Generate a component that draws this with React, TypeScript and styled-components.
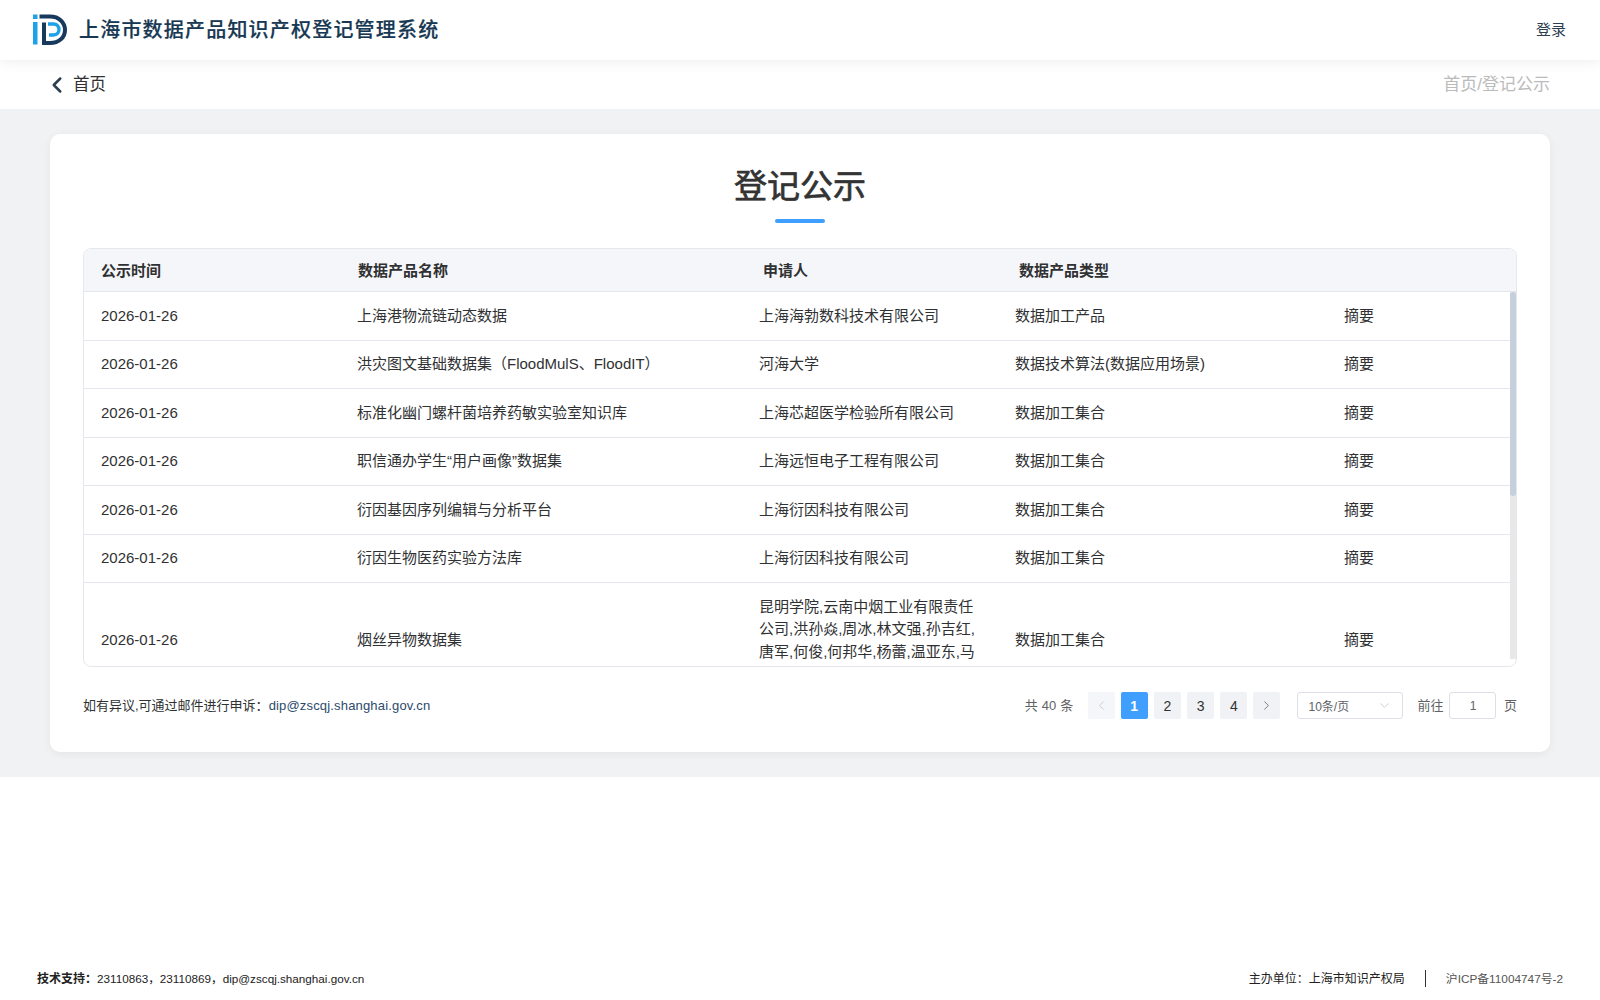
import React from "react";
import styled, { createGlobalStyle } from "styled-components";
import { ChevronLeft, ChevronRight, ChevronDown } from "lucide-react";

const Global = createGlobalStyle`
  html, body { margin: 0; padding: 0; background: #fff; }
  body { font-family: "Liberation Sans", "Noto Sans CJK SC", sans-serif; color: #303133; }
  * { box-sizing: border-box; }
`;

const Page = styled.div`
  min-height: 1000px;
  display: flex;
  flex-direction: column;
`;
const Header = styled.header`
  position: relative;
  z-index: 2;
  height: 60px;
  padding: 0 34px 0 33px;
  display: flex;
  align-items: center;
  justify-content: space-between;
  background: #fff;
  box-shadow: 0 2px 12px rgba(0, 0, 0, 0.07);
`;
const Brand = styled.div`
  display: flex;
  align-items: center;
  gap: 11px;
`;
const BrandName = styled.h1`
  margin: 0 0 4px;
  font-size: 20px;
  font-weight: 500;
  letter-spacing: 1.2px;
  color: #173853;
  -webkit-text-stroke: 0.2px #173853;
`;
const Login = styled.a`
  margin-bottom: 4px;
  font-size: 15px;
  color: #2c3e50;
`;
const Nav = styled.nav`
  height: 49px;
  padding: 0 50px 0 44px;
  display: flex;
  align-items: center;
  justify-content: space-between;
  background: #fff;
`;
const Back = styled.a`
  display: flex;
  align-items: center;
  gap: 3px;
  font-size: 16.5px;
  color: #303133;
`;
const BackLabel = styled.span`
  margin-bottom: 4px;
`;
const Crumb = styled.span`
  margin-bottom: 4px;
  font-size: 17px;
  color: #bbb;
`;
const Main = styled.main`
  background: #f1f2f4;
  padding: 25px 50px;
`;
const Card = styled.section`
  height: 618px;
  padding: 33px 33px 0;
  background: #fff;
  border-radius: 10px;
  box-shadow: 0 2px 10px rgba(0, 0, 0, 0.06);
`;
const Title = styled.h2`
  margin: 0;
  height: 36px;
  line-height: 40px;
  text-align: center;
  font-size: 33px;
  font-weight: 400;
  color: #333;
  -webkit-text-stroke: 0.7px #333;
`;
const TitleBar = styled.div`
  width: 50px;
  height: 4px;
  margin: 16px auto 25px;
  border-radius: 2px;
  background: #409eff;
`;
const TableWrap = styled.div`
  position: relative;
  height: 419px;
  border: 1px solid #e4e7ed;
  border-radius: 8px;
  overflow: hidden;
`;
const Row = styled.div<{ $columns: string }>`
  display: grid;
  grid-template-columns: ${(p) => p.$columns};
  align-items: center;
  border-bottom: 1px solid #e4e7ed;
`;
const HeadRow = styled(Row)`
  height: 43px;
  background: #f5f6f9;
  font-size: 15px;
  font-weight: 700;
  color: #303133;
`;
const HeadCell = styled.div`
  padding: 0 17px 2px;
`;
const BodyScroll = styled.div`
  height: 375px;
  overflow: hidden;
  font-size: 15px;
  line-height: 22.5px;
  color: #303133;
`;
const BodyRow = styled(Row)`
  margin-right: 6px;
`;
const Cell = styled.div`
  padding: 12.5px 17px;
`;
const Track = styled.div`
  position: absolute;
  top: 43px;
  right: 0;
  bottom: 7px;
  width: 6px;
  background: #e8e8e8;
`;
const Thumb = styled.div`
  height: 204px;
  border-radius: 3px;
  background: #c5d0dc;
`;
const Bottom = styled.div`
  height: 77px;
  display: flex;
  align-items: center;
  justify-content: space-between;
`;
const Notice = styled.div`
  margin-bottom: 2px;
  font-size: 13px;
  color: #303133;
`;
const Mail = styled.span`
  letter-spacing: 0.17px;
  color: #2c4a6b;
`;
const Pager = styled.div`
  display: flex;
  align-items: center;
  font-size: 13px;
  color: #606266;
`;
const Total = styled.span`
  margin: 0 14px 2px 0;
  letter-spacing: 0.2px;
`;
const PageBtn = styled.button<{ $active?: boolean; $disabled?: boolean }>`
  width: 27px;
  height: 27px;
  margin-right: 6.2px;
  padding: 0;
  border: 0;
  border-radius: 2px;
  display: flex;
  align-items: center;
  justify-content: center;
  font: ${(p) => (p.$active ? 700 : 400)} 14px "Liberation Sans", sans-serif;
  background: ${(p) => (p.$active ? "#409eff" : p.$disabled ? "#f5f6f9" : "#f0f2f5")};
  color: ${(p) => (p.$active ? "#fff" : p.$disabled ? "#c0c4cc" : "#303133")};
`;
const Select = styled.div`
  width: 106px;
  height: 27px;
  margin: 0 14px 0 10.8px;
  padding: 0 10px;
  display: flex;
  align-items: center;
  justify-content: space-between;
  border: 1px solid #dcdfe6;
  border-radius: 3px;
  font-size: 12px;
  color: #606266;
`;
const JumpLabel = styled.span`
  margin-bottom: 2px;
`;
const Jump = styled.div`
  width: 47px;
  height: 27px;
  margin: 0 7.5px 0 6px;
  display: flex;
  align-items: center;
  justify-content: center;
  border: 1px solid #dcdfe6;
  border-radius: 3px;
  font-size: 12px;
  color: #606266;
`;
const Footer = styled.footer`
  margin-top: auto;
  height: 42px;
  padding: 0 37px;
  display: flex;
  align-items: center;
  justify-content: space-between;
  color: #222;
`;
const Support = styled.div`
  margin-bottom: 4px;
  font-size: 11.7px;
`;
const SupportLabel = styled.b`
  font-size: 12px;
`;
const FooterRight = styled.div`
  display: flex;
  align-items: center;
  font-size: 12px;
`;
const Sponsor = styled.span`
  margin-bottom: 4px;
`;
const Divider = styled.i`
  width: 1px;
  height: 17px;
  margin: 0 20px 2px;
  background: #333;
`;
const Icp = styled.span`
  margin-bottom: 4px;
  font-size: 11.8px;
  color: #555;
`;

const headCols = "257px 405px 256px 1fr";
const bodyCols = "256px 402px 256px 329px 1fr";

const rows = [
  ["上海港物流链动态数据", "上海海勃数科技术有限公司", "数据加工产品"],
  ["洪灾图文基础数据集（FloodMulS、FloodIT）", "河海大学", "数据技术算法(数据应用场景)"],
  ["标准化幽门螺杆菌培养药敏实验室知识库", "上海芯超医学检验所有限公司", "数据加工集合"],
  ["职信通办学生“用户画像”数据集", "上海远恒电子工程有限公司", "数据加工集合"],
  ["衍因基因序列编辑与分析平台", "上海衍因科技有限公司", "数据加工集合"],
  ["衍因生物医药实验方法库", "上海衍因科技有限公司", "数据加工集合"],
  ["烟丝异物数据集", "昆明学院,云南中烟工业有限责任公司,洪孙焱,周冰,林文强,孙吉红,唐军,何俊,何邦华,杨蕾,温亚东,马雯,李军,王磊", "数据加工集合"],
];

const Logo = () => (
  <svg width="35" height="32" viewBox="0 0 35 32" fill="none">
    <rect x="0" y="0.5" width="4.5" height="4.5" fill="#1da1e8" />
    <rect x="0" y="8" width="4.5" height="22.5" fill="#1da1e8" />
    <path d="M6.5 2.5H17C26 2.5 32 8.5 32 16S26 29 17 29H11V8.5" stroke="#17395c" strokeWidth="4" />
    <path d="M15 10H20.5C24 10 26 12.5 26 15.5S24 21 20.5 21H16" stroke="#1da1e8" strokeWidth="3.4" />
  </svg>
);

export default function App() {
  return (
    <Page>
      <Global />
      <Header>
        <Brand>
          <Logo />
          <BrandName>上海市数据产品知识产权登记管理系统</BrandName>
        </Brand>
        <Login>登录</Login>
      </Header>
      <Nav>
        <Back>
          <ChevronLeft size={26} strokeWidth={2.3} color="#2c3e50" />
          <BackLabel>首页</BackLabel>
        </Back>
        <Crumb>首页/登记公示</Crumb>
      </Nav>
      <Main>
        <Card>
          <Title>登记公示</Title>
          <TitleBar />
          <TableWrap>
            <HeadRow $columns={headCols}>
              <HeadCell>公示时间</HeadCell>
              <HeadCell>数据产品名称</HeadCell>
              <HeadCell>申请人</HeadCell>
              <HeadCell>数据产品类型</HeadCell>
            </HeadRow>
            <BodyScroll>
              {rows.map((r, i) => (
                <BodyRow key={i} $columns={bodyCols}>
                  <Cell>2026-01-26</Cell>
                  <Cell>{r[0]}</Cell>
                  <Cell>{r[1]}</Cell>
                  <Cell>{r[2]}</Cell>
                  <Cell>摘要</Cell>
                </BodyRow>
              ))}
            </BodyScroll>
            <Track>
              <Thumb />
            </Track>
          </TableWrap>
          <Bottom>
            <Notice>
              如有异议,可通过邮件进行申诉：<Mail>dip@zscqj.shanghai.gov.cn</Mail>
            </Notice>
            <Pager>
              <Total>共 40 条</Total>
              <PageBtn $disabled>
                <ChevronLeft size={15} strokeWidth={1.3} />
              </PageBtn>
              <PageBtn $active>1</PageBtn>
              <PageBtn>2</PageBtn>
              <PageBtn>3</PageBtn>
              <PageBtn>4</PageBtn>
              <PageBtn>
                <ChevronRight size={15} strokeWidth={1.3} color="#606266" />
              </PageBtn>
              <Select>
                10条/页
                <ChevronDown size={15} strokeWidth={1.1} color="#b8bcc4" />
              </Select>
              <JumpLabel>前往</JumpLabel>
              <Jump>1</Jump>
              <JumpLabel>页</JumpLabel>
            </Pager>
          </Bottom>
        </Card>
      </Main>
      <Footer>
        <Support>
          <SupportLabel>技术支持：</SupportLabel>23110863，23110869，dip@zscqj.shanghai.gov.cn
        </Support>
        <FooterRight>
          <Sponsor>主办单位：上海市知识产权局</Sponsor>
          <Divider />
          <Icp>沪ICP备11004747号-2</Icp>
        </FooterRight>
      </Footer>
    </Page>
  );
}
